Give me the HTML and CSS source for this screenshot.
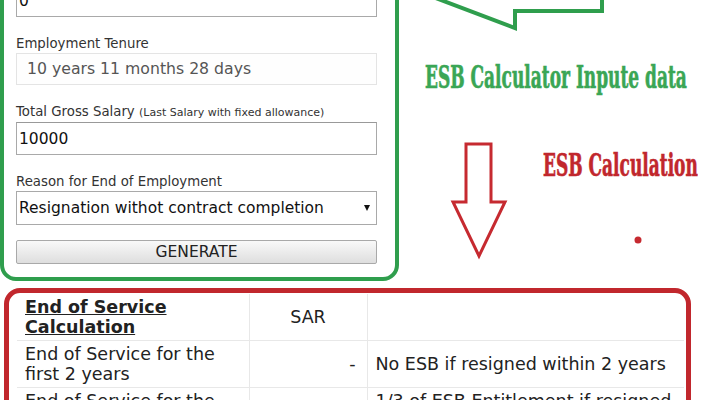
FILE: index.html
```html
<!DOCTYPE html>
<html lang="en">
<head>
<meta charset="utf-8">
<title>ESB Calculator</title>
<link rel="stylesheet" href="styles.css">
</head>
<body>
<div class="page">
  <div class="top">
    <form class="card-green">
      <input class="inp" type="text" value="0">
      <div class="field">
        <label class="lbl">Employment Tenure</label>
        <div class="readonly">10 years 11 months 28 days</div>
      </div>
      <div class="field">
        <label class="lbl">Total Gross Salary <span class="hint">(Last Salary with fixed allowance)</span></label>
        <input class="inp" type="text" value="10000">
      </div>
      <div class="field">
        <label class="lbl">Reason for End of Employment</label>
        <div class="select-wrap">
          <select class="sel">
            <option>Resignation withot contract completion</option>
          </select>
        </div>
      </div>
      <button class="btn" type="button">GENERATE</button>
    </form>
    <div class="annot">
      <svg class="arrows" width="321" height="287" viewBox="0 0 321 287">
        <polyline points="34,-3 116,28 116,11 203,11 203,-3" fill="none" stroke="#2f9e4d" stroke-width="4" stroke-linejoin="miter"/>
        <polygon points="67,144 92,144 92,202 106,202 80,256 54,202 67,202" fill="none" stroke="#c62a30" stroke-width="3" stroke-linejoin="miter"/>
        <circle cx="239" cy="240" r="3.5" fill="#c62a30"/>
      </svg>
      <span class="tag tag-green">ESB Calculator Inpute data</span>
      <span class="tag tag-red">ESB Calculation</span>
    </div>
  </div>
  <div class="card-red">
    <table class="tbl">
      <colgroup>
        <col class="c1"><col class="c2"><col class="c3">
      </colgroup>
      <tr>
        <th class="head"><u>End of Service Calculation</u></th>
        <td class="mid">SAR</td>
        <td></td>
      </tr>
      <tr>
        <td>End of Service for the first 2 years</td>
        <td class="num">-</td>
        <td>No ESB if resigned within 2 years</td>
      </tr>
      <tr>
        <td>End of Service for the next 3 years</td>
        <td class="num">-</td>
        <td>1/3 of ESB Entitlement if resigned between 2 and 5 years</td>
      </tr>
    </table>
  </div>
</div>
</body>
</html>
```
FILE: styles.css
```css
html, body {
  margin: 0;
  padding: 0;
  background: #ffffff;
  overflow: hidden;
}
body {
  font-family: "DejaVu Sans", Verdana, sans-serif;
  color: #222;
}
.page {
  width: 720px;
  height: 400px;
  overflow: hidden;
}
.top {
  display: flex;
  align-items: flex-start;
}
.card-green {
  box-sizing: border-box;
  width: 399px;
  margin: -30px 0 0 0;
  padding: 10px 18px 13px 12px;
  border: 4px solid #2f9e4d;
  border-radius: 16px;
  display: flex;
  flex-direction: column;
}
.field {
  display: flex;
  flex-direction: column;
  margin-top: 18px;
}
.lbl {
  font-size: 13.3px;
  line-height: 16px;
  color: #333;
  margin-top: 1px;
  margin-bottom: 1px;
}
.hint {
  font-size: 11px;
}
.inp {
  box-sizing: border-box;
  width: 100%;
  height: 33px;
  margin: 0;
  padding: 0 2px;
  border: 1px solid #a9a9a9;
  border-top-color: #999;
  font-family: "DejaVu Sans", Verdana, sans-serif;
  font-size: 15.5px;
  color: #111;
  background: #fff;
}
.readonly {
  box-sizing: border-box;
  height: 32px;
  padding: 0 10px;
  border: 1px solid #e4e4e4;
  background: #fefefe;
  font-size: 15.7px;
  line-height: 30px;
  color: #555;
}
.select-wrap {
  position: relative;
}
.select-wrap::after {
  content: "";
  position: absolute;
  right: 7px;
  top: 14px;
  border-left: 3px solid transparent;
  border-right: 3px solid transparent;
  border-top: 6px solid #111;
}
.sel {
  box-sizing: border-box;
  width: 100%;
  height: 34px;
  margin: 0;
  padding: 0 2px;
  border: 1px solid #a9a9a9;
  border-radius: 0;
  background: #fff;
  -webkit-appearance: none;
  appearance: none;
  font-family: "DejaVu Sans", Verdana, sans-serif;
  font-size: 15.5px;
  color: #111;
}
.btn {
  box-sizing: border-box;
  width: 100%;
  height: 24px;
  margin-top: 15px;
  padding: 0;
  border: 1px solid #a9a9a9;
  border-radius: 2px;
  background: linear-gradient(#f9f9f9, #dedede);
  font-family: "DejaVu Sans", Verdana, sans-serif;
  font-size: 15.5px;
  line-height: 22px;
  color: #222;
}
.annot {
  position: relative;
  flex: 1;
  height: 280px;
}
.arrows {
  position: absolute;
  left: 0;
  top: 0;
  overflow: visible;
}
.tag {
  position: absolute;
  font-family: "DejaVu Serif Condensed", "DejaVu Serif", serif;
  font-weight: bold;
  font-size: 31px;
  line-height: 32px;
  white-space: nowrap;
  transform-origin: left top;
  transform: scaleX(0.61);
  -webkit-text-stroke: 0.6px currentColor;
}
.tag-green {
  left: 26px;
  top: 61px;
  color: #3aa655;
}
.tag-red {
  left: 144px;
  top: 149px;
  color: #c1272d;
}
.card-red {
  box-sizing: border-box;
  width: 687px;
  height: 200px;
  margin: 7px 0 0 4px;
  padding: 1px 2px 0 8px;
  border: 5px solid #c1272d;
  border-radius: 16px;
}
.tbl {
  width: 100%;
  border-collapse: collapse;
  table-layout: fixed;
  font-size: 17.5px;
  line-height: 20px;
  color: #222;
}
.c1 { width: 232px; }
.c2 { width: 118px; }
.tbl th,
.tbl td {
  padding: 3px 8px;
  text-align: left;
  vertical-align: middle;
  border-top: 1px solid #e8e8e8;
  border-left: 1px solid #e8e8e8;
}
.tbl tr:first-child th,
.tbl tr:first-child td {
  border-top: none;
}
.tbl th:first-child,
.tbl td:first-child {
  border-left: none;
}
.head {
  font-weight: bold;
}
.mid {
  text-align: center !important;
}
.num {
  text-align: right !important;
  padding-right: 11px !important;
}
```
